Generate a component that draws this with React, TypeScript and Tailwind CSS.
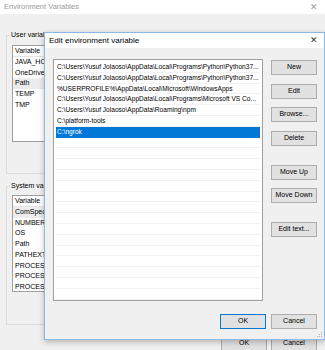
import React from "react";

const font = { fontFamily: '"Liberation Sans", Arial, sans-serif' };

const paths = [
  "C:\\Users\\Yusuf Jolaoso\\AppData\\Local\\Programs\\Python\\Python37...",
  "C:\\Users\\Yusuf Jolaoso\\AppData\\Local\\Programs\\Python\\Python37...",
  "%USERPROFILE%\\AppData\\Local\\Microsoft\\WindowsApps",
  "C:\\Users\\Yusuf Jolaoso\\AppData\\Local\\Programs\\Microsoft VS Co...",
  "C:\\Users\\Yusuf Jolaoso\\AppData\\Roaming\\npm",
  "C:\\platform-tools",
  "C:\\ngrok",
];

function Btn({ label, focus = false }: { label: string; focus?: boolean }) {
  return (
    <div
      className={`w-[46px] h-[15px] flex items-center justify-center bg-[#e1e1e1] text-[7px] text-black border ${
        focus ? "border-[#0078d7]" : "border-[#adadad]"
      }`}
    >
      {label}
    </div>
  );
}

function OuterList({ rows, selected, height }: { rows: string[]; selected: number; height: string }) {
  return (
    <div className={`ml-[5px] ${height} w-[300px] bg-white border border-[#a0a0a0] overflow-hidden`}>
      <div className="h-[11px] flex items-center pl-[2px] text-[7px] text-black border-b border-[#e5e5e5]">Variable</div>
      {rows.map((r, i) => (
        <div
          key={i}
          className={`h-[10.7px] flex items-center pl-[2px] text-[7px] text-black ${i === selected ? "bg-[#ececec]" : ""}`}
        >
          {r}
        </div>
      ))}
    </div>
  );
}

export default function App() {
  const rows = Array.from({ length: 23 }, (_, i) => paths[i] ?? "");
  return (
    <div className="relative w-[325px] h-[350px] bg-[#f0f0f0] overflow-hidden" style={font}>
      {/* outer window */}
      <div className="h-[14px] bg-white flex items-center justify-between pl-[4px] pr-[7px]">
        <span className="text-[7.5px] text-[#9a9a9a]">Environment Variables</span>
        <span className="text-[9px] text-[#9a9a9a] leading-none">✕</span>
      </div>
      <div className="pl-[6px] pt-[21px]">
        <div className="relative w-[312px] h-[139px] border border-[#dcdcdc] pt-[9px]">
          <span className="absolute -top-[5px] left-[3px] bg-[#f0f0f0] px-[1px] text-[7px] text-black leading-none">
            User variables
          </span>
          <OuterList rows={["JAVA_HOME", "OneDrive", "Path", "TEMP", "TMP"]} selected={2} height="h-[97px]" />
        </div>
        <div className="relative w-[312px] h-[139px] border border-[#dcdcdc] pt-[8px] mt-[12px]">
          <span className="absolute -top-[5px] left-[3px] bg-[#f0f0f0] px-[1px] text-[7px] text-black leading-none">
            System variables
          </span>
          <OuterList
            rows={["ComSpec", "NUMBER_OF_PROCESSORS", "OS", "Path", "PATHEXT", "PROCESSOR_ARCH", "PROCESSOR_ID", "PROCESSOR_LEVEL"]}
            selected={0}
            height="h-[97px]"
          />
        </div>
        <div className="flex justify-end gap-[4px] pr-[8px] mt-[11px]">
          <div className="w-[46px] h-[15px] flex items-center justify-center bg-[#e1e1e1] border border-[#adadad] text-[7px]">OK</div>
          <div className="w-[46px] h-[15px] flex items-center justify-center bg-[#e1e1e1] border border-[#adadad] text-[7px]">Cancel</div>
        </div>
      </div>

      {/* edit dialog */}
      <div className="absolute left-[44px] top-[32px] w-[281px] h-[308px] bg-[#f0f0f0] border border-[#8cb8e8] shadow-[0_2px_6px_rgba(0,0,0,0.25)] flex flex-col">
        <div className="h-[15px] bg-white flex items-center justify-between pl-[4px] pr-[6px]">
          <span className="text-[8px] text-black">Edit environment variable</span>
          <span className="text-[9px] text-[#333] leading-none">✕</span>
        </div>
        <div className="flex gap-[8px] pl-[8px] pt-[11px]">
          <div className="w-[210px] h-[242px] bg-white border border-[#a0a0a0] p-[2px] pb-0 overflow-hidden">
            {rows.map((p, i) => (
              <div
                key={i}
                className={`h-[10.8px] flex items-center pl-[1px] text-[6.6px] whitespace-nowrap overflow-hidden border-b ${
                  i === 6 ? "bg-[#0078d7] text-white border-[#0078d7]" : "text-black border-[#f2f2f2]"
                }`}
              >
                {p}
              </div>
            ))}
          </div>
          <div className="flex flex-col pt-[1px]">
            <Btn label="New" />
            <div className="h-[9px]" />
            <Btn label="Edit" />
            <div className="h-[8px]" />
            <Btn label="Browse..." />
            <div className="h-[9px]" />
            <Btn label="Delete" />
            <div className="h-[19px]" />
            <Btn label="Move Up" />
            <div className="h-[8px]" />
            <Btn label="Move Down" />
            <div className="h-[19px]" />
            <Btn label="Edit text..." />
          </div>
        </div>
        <div className="flex justify-end gap-[5px] pr-[7px] mt-[13px]">
          <Btn label="OK" focus />
          <Btn label="Cancel" />
        </div>
        <svg className="absolute right-[1px] bottom-[1px]" width="6" height="6" viewBox="0 0 6 6">
          <rect x="4" y="0" width="1" height="1" fill="#b0b0b0" />
          <rect x="2" y="2" width="1" height="1" fill="#b0b0b0" />
          <rect x="4" y="2" width="1" height="1" fill="#b0b0b0" />
          <rect x="0" y="4" width="1" height="1" fill="#b0b0b0" />
          <rect x="2" y="4" width="1" height="1" fill="#b0b0b0" />
          <rect x="4" y="4" width="1" height="1" fill="#b0b0b0" />
        </svg>
      </div>
    </div>
  );
}
